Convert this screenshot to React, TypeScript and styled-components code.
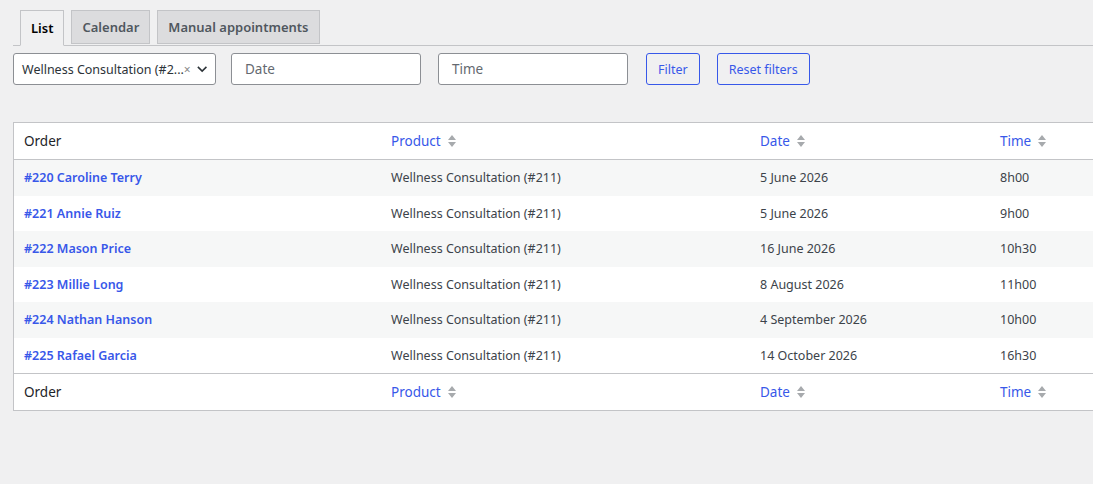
import React from "react";
import styled, { createGlobalStyle } from "styled-components";

const G = createGlobalStyle`
  html,body{margin:0;background:#f0f0f1;overflow:hidden;}
  body{font-family:"Noto Sans","Open Sans",sans-serif;font-size:13px;color:#3c434a;}
`;
const Page = styled.div`padding:10px 0 0 13px;width:1200px;`;
const Tabs = styled.div`display:flex;gap:7px;padding-left:7px;border-bottom:1px solid #c3c4c7;height:35px;`;
const Tab = styled.div<{ $a?: boolean }>`
  height:34px;box-sizing:border-box;padding:0 10px;display:flex;align-items:center;
  font-weight:600;font-size:13px;border:1px solid #c3c4c7;
  background:${p => (p.$a ? "#f0f0f1" : "#dcdcde")};color:${p => (p.$a ? "#000" : "#50575e")};
  ${p => p.$a && "border-bottom-color:#f0f0f1;height:36px;margin-bottom:-1px;"}
`;
const Filters = styled.div`display:flex;align-items:center;margin-top:7px;`;
const Select = styled.div`width:203px;height:32px;box-sizing:border-box;border:1px solid #8c8f94;border-radius:3px;background:#fff;display:flex;align-items:center;padding:0 8px;color:#2c3338;font-size:12.5px;`;
const SelText = styled.span`flex:1;white-space:nowrap;`;
const Input = styled.div<{ $ml: number }>`width:190px;height:32px;box-sizing:border-box;border:1px solid #8c8f94;border-radius:3px;background:#fff;display:flex;align-items:center;padding:0 13px;color:#646970;font-size:13.5px;margin-left:${p => p.$ml}px;`;
const Btn = styled.div<{ $ml: number }>`height:32px;box-sizing:border-box;border:1px solid #3858e9;border-radius:3px;display:flex;align-items:center;padding:0 11px;color:#3858e9;margin-left:${p => p.$ml}px;font-size:12.5px;`;
const Table = styled.table`margin-top:37px;width:1085px;border-collapse:collapse;background:#fff;border:1px solid #c3c4c7;table-layout:fixed;`;
const Th = styled.th<{ $w?: number; $link?: boolean; $top?: boolean }>`
  ${p => p.$w && `width:${p.$w}px;`}
  text-align:left;font-weight:400;font-size:13.5px;height:36px;padding:0 10px;white-space:nowrap;
  color:${p => (p.$link ? "#3858e9" : "#1d2327")};
  border-${p => (p.$top ? "bottom" : "top")}:1px solid #c3c4c7;
`;
const Tr = styled.tr<{ $odd: boolean }>`background:${p => (p.$odd ? "#f6f7f7" : "#fff")};`;
const Td = styled.td`height:35.5px;padding:0 10px;font-size:12.5px;color:#3c434a;white-space:nowrap;`;
const A = styled.a`color:#3858e9;font-weight:600;text-decoration:none;`;

const Sort = () => (
  <svg width="10" height="16" viewBox="0 0 10 16" style={{ verticalAlign: "-3px", marginLeft: 6 }}>
    <path d="M1 7 L5 2 L9 7Z M1 9 L5 14 L9 9Z" fill="#a7aaad" />
  </svg>
);

const rows = [
  ["#220 Caroline Terry", "5 June 2026", "8h00"],
  ["#221 Annie Ruiz", "5 June 2026", "9h00"],
  ["#222 Mason Price", "16 June 2026", "10h30"],
  ["#223 Millie Long", "8 August 2026", "11h00"],
  ["#224 Nathan Hanson", "4 September 2026", "10h00"],
  ["#225 Rafael Garcia", "14 October 2026", "16h30"],
];

const Head = ({ top }: { top?: boolean }) => (
  <tr>
    <Th $w={347} $top={top}>Order</Th>
    <Th $w={349} $link $top={top}>Product<Sort /></Th>
    <Th $w={220} $link $top={top}>Date<Sort /></Th>
    <Th $link $top={top}>Time<Sort /></Th>
  </tr>
);

export default function App() {
  return (
    <Page>
      <G />
      <Tabs>
        <Tab $a>List</Tab>
        <Tab>Calendar</Tab>
        <Tab>Manual appointments</Tab>
      </Tabs>
      <Filters>
        <Select>
          <SelText>Wellness Consultation (#2...</SelText>
          <span style={{ color: "#888", fontSize: 12, marginRight: 6 }}>×</span>
          <svg width="12" height="8" viewBox="0 0 12 8"><path d="M1 1.5 L6 6.5 L11 1.5" stroke="#2c3338" strokeWidth="1.8" fill="none" /></svg>
        </Select>
        <Input $ml={15}>Date</Input>
        <Input $ml={17}>Time</Input>
        <Btn $ml={18}>Filter</Btn>
        <Btn $ml={17}>Reset filters</Btn>
      </Filters>
      <Table>
        <thead><Head top /></thead>
        <tbody>
          {rows.map((r, i) => (
            <Tr key={i} $odd={i % 2 === 0}>
              <Td><A href="#">{r[0]}</A></Td>
              <Td>Wellness Consultation (#211)</Td>
              <Td>{r[1]}</Td>
              <Td>{r[2]}</Td>
            </Tr>
          ))}
        </tbody>
        <tfoot><Head /></tfoot>
      </Table>
    </Page>
  );
}
